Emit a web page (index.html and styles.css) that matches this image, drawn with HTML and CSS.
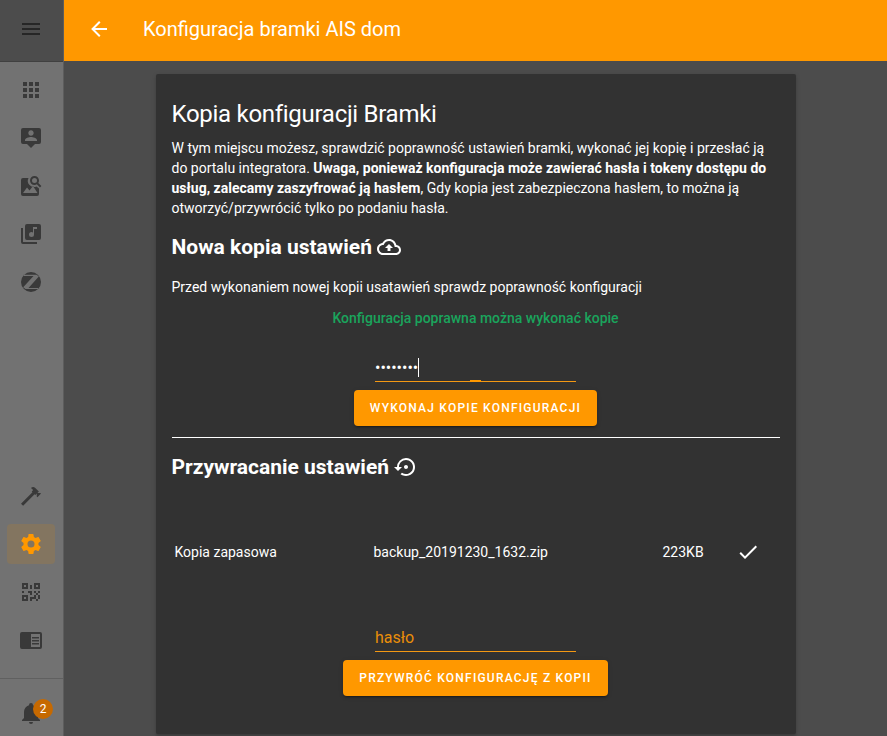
FILE: index.html
```html
<!DOCTYPE html>
<html lang="pl">
<head>
<meta charset="utf-8">
<title>Konfiguracja bramki AIS dom</title>
<link rel="stylesheet" href="styles.css">
</head>
<body>
<aside class="sidebar">
  <div class="menu"><svg class="icon" viewBox="0 0 24 24"><path d="M3 6h18v2H3V6m0 5h18v2H3v-2m0 5h18v2H3v-2z"/></svg></div>
  <nav class="nav">
    <a class="item"><svg class="icon" viewBox="0 0 24 24"><path d="M16 20h4v-4h-4m0-2h4v-4h-4m-6-2h4V4h-4m6 4h4V4h-4m-6 10h4v-4h-4m-6 4h4v-4H4m0 10h4v-4H4m6 4h4v-4h-4m-6-8h4V4H4v4z"/></svg></a>
    <a class="item"><svg class="icon" viewBox="0 0 24 24"><path d="M20 2H4a2 2 0 0 0-2 2v12a2 2 0 0 0 2 2h4l4 4 4-4h4a2 2 0 0 0 2-2V4a2 2 0 0 0-2-2m-8 2.300c1.500 0 2.700 1.200 2.700 2.700S13.500 9.700 12 9.700 9.300 8.500 9.300 7s1.200-2.700 2.700-2.700M18 15H6v-.9c0-2 4-3.100 6-3.100s6 1.100 6 3.100v.9z"/></svg></a>
    <a class="item"><svg class="icon" viewBox="0 0 24 24"><path d="M15.500 2C13 2 11 4 11 6.500S13 11 15.500 11c.9 0 1.700-.25 2.400-.69L21 13.390 22.390 12l-3.080-3.110c.44-.69.69-1.520.69-2.390C20 4 18 2 15.500 2m0 2a2.500 2.500 0 0 1 0 5 2.500 2.500 0 0 1 0-5"/><path fill-rule="evenodd" d="M9.500 4H4a2 2 0 0 0-2 2v14a2 2 0 0 0 2 2h14a2 2 0 0 0 2-2v-5.500l-2.500-2A6.200 6.200 0 0 1 9.500 4M8 13.500l2.500 3 3.500-4.500 4.500 7H4l4-5.500z"/></svg></a>
    <a class="item"><svg class="icon" viewBox="0 0 24 24"><path d="M20 2H8a2 2 0 0 0-2 2v12a2 2 0 0 0 2 2h12a2 2 0 0 0 2-2V4a2 2 0 0 0-2-2m-2 5h-3v5.500a2.500 2.500 0 1 1-2.500-2.500c.57 0 1.080.19 1.500.51V5h4M4 6H2v14a2 2 0 0 0 2 2h14v-2H4V6z"/></svg></a>
    <a class="item"><svg class="icon" viewBox="0 0 24 24"><path fill-rule="evenodd" d="M12 2a10 10 0 1 1 0 20 10 10 0 0 1 0-20M4.800 4.700 17.500 4.700 19.800 6.500 9.500 17.900 20.300 17.900 19.500 19 6.500 19 4.200 17.200 14.500 5.900 4 5.900z"/></svg></a>
    <span class="spacer"></span>
    <a class="item"><svg class="icon" viewBox="0 0 24 24"><path d="M2 19.630L13.430 8.200l-.71-.7 1.420-1.430L12 3.890c1.200-1.190 3.090-1.190 4.270 0l3.600 3.610-1.420 1.410h2.840l.71.710-3.550 3.590-.71-.71V9.620l-1.470 1.420-.71-.71L4.130 21.760 2 19.630z"/></svg></a>
    <a class="item active"><svg class="icon" viewBox="0 0 24 24"><path d="M12 15.500A3.500 3.500 0 0 1 8.500 12 3.500 3.500 0 0 1 12 8.500a3.500 3.500 0 0 1 3.500 3.500 3.500 3.500 0 0 1-3.500 3.500m7.430-2.530c.04-.32.070-.64.070-.97s-.03-.66-.07-1l2.110-1.630c.19-.15.240-.42.120-.64l-2-3.460c-.12-.22-.39-.31-.61-.22l-2.490 1c-.52-.39-1.060-.73-1.690-.98l-.37-2.650A.506.506 0 0 0 14 2h-4c-.25 0-.46.180-.5.420l-.37 2.650c-.63.250-1.170.59-1.690.98l-2.490-1c-.22-.09-.49 0-.61.220l-2 3.460c-.13.220-.07.490.12.640L4.570 11c-.04.340-.07.670-.07 1s.03.650.07.970l-2.110 1.660c-.19.150-.25.420-.12.640l2 3.460c.12.220.39.300.61.220l2.490-1.010c.52.400 1.060.740 1.690.990l.37 2.650c.04.240.25.420.5.420h4c.25 0 .46-.18.5-.42l.37-2.650c.63-.26 1.170-.59 1.690-.99l2.490 1.010c.22.080.49 0 .61-.22l2-3.460c.12-.22.070-.49-.12-.64l-2.110-1.660z"/></svg></a>
    <a class="item"><svg class="icon" viewBox="0 0 24 24"><path d="M3 11h2v2H3v-2m8-6h2v4h-2V5m-2 6h4v4h-2v-2H9v-2m6 0h2v2h2v-2h2v2h-2v2h2v4h-2v2h-2v-2h-4v2h-2v-4h4v-2h2v-2h-2v-2m4 8v-4h-2v4h2M15 3h6v6h-6V3m2 2v2h2V5h-2M3 3h6v6H3V3m2 2v2h2V5H5M3 15h6v6H3v-6m2 2v2h2v-2H5z"/></svg></a>
    <a class="item"><svg class="icon" viewBox="0 0 24 24"><path fill-rule="evenodd" d="M3 4h18a2 2 0 0 1 2 2v13a2 2 0 0 1-2 2H3a2 2 0 0 1-2-2V6a2 2 0 0 1 2-2m9 2v13h9V6zM13 9h7v1.500h-7zm0 3h7v1.500h-7zm0 3h7v1.500h-7z"/></svg></a>
  </nav>
  <div class="notice"><div class="bell"><svg class="icon" viewBox="0 0 24 24"><path d="M21 19v1H3v-1l2-2v-6c0-3.100 2.030-5.830 5-6.710V4a2 2 0 0 1 4 0v.29c2.970.88 5 3.610 5 6.710v6l2 2m-7 2a2 2 0 0 1-4 0"/></svg><span class="badge">2</span></div></div>
</aside>
<div class="page">
  <header class="bar">
    <svg class="icon" viewBox="0 0 24 24"><path d="M20 11v2H8l5.500 5.500-1.420 1.420L4.160 12l7.920-7.920L13.500 5.500 8 11h12z"/></svg>
    <span>Konfiguracja bramki AIS dom</span>
  </header>
  <main class="card">
    <h1>Kopia konfiguracji Bramki</h1>
    <p class="intro">W tym miejscu możesz, sprawdzić poprawność ustawień bramki, wykonać jej kopię i przesłać ją do portalu integratora. <b>Uwaga, ponieważ konfiguracja może zawierać hasła i tokeny dostępu do usług, zalecamy zaszyfrować ją hasłem</b>, Gdy kopia jest zabezpieczona hasłem, to można ją otworzyć/przywrócić tylko po podaniu hasła.</p>
    <h2>Nowa kopia ustawień <svg class="icon" viewBox="0 0 24 24"><path d="M19.350 10.040C18.670 6.590 15.640 4 12 4 9.110 4 6.600 5.640 5.350 8.040 2.340 8.360 0 10.910 0 14c0 3.310 2.690 6 6 6h13c2.760 0 5-2.240 5-5 0-2.640-2.050-4.780-4.650-4.960zM19 18H6c-2.210 0-4-1.790-4-4 0-2.050 1.530-3.760 3.560-3.970l1.070-.11.500-.95C8.080 7.140 9.940 6 12 6c2.620 0 4.880 1.860 5.390 4.430l.3 1.500 1.530.11c1.560.1 2.780 1.410 2.780 2.960 0 1.650-1.350 3-3 3zM8 13h2.550v3h2.900v-3H16l-4-4z"/></svg></h2>
    <p class="hint">Przed wykonaniem nowej kopii usatawień sprawdz poprawność konfiguracji</p>
    <p class="valid">Konfiguracja poprawna można wykonać kopie</p>
    <div class="field focused"><span class="dots">••••••••</span><span class="caret"></span></div>
    <button class="action">WYKONAJ KOPIE KONFIGURACJI</button>
    <div class="rule"></div>
    <h2>Przywracanie ustawień <svg class="icon" viewBox="0 0 24 24"><path d="M14 12c0-1.100-.9-2-2-2s-2 .9-2 2 .9 2 2 2 2-.9 2-2zm-2-9a9 9 0 0 0-9 9H0l4 4 4-4H5c0-3.870 3.130-7 7-7s7 3.130 7 7a6.995 6.995 0 0 1-11.060 5.700l-1.420 1.440A9 9 0 1 0 12 3z"/></svg></h2>
    <div class="backup"><span class="kind">Kopia zapasowa</span><span class="file">backup_20191230_1632.zip</span><span class="size">223KB</span><svg class="icon" viewBox="0 0 24 24"><path d="M21 7L9 19l-5.500-5.500 1.410-1.410L9 16.170 19.590 5.590 21 7z"/></svg></div>
    <div class="field empty">hasło</div>
    <button class="action">PRZYWRÓĆ KONFIGURACJĘ Z KOPII</button>
  </main>
</div>
</body>
</html>
```
FILE: styles.css
```css
* { box-sizing: border-box; }
body {
  margin: 0;
  height: 736px;
  display: flex;
  overflow: hidden;
  background: #4c4c4c;
  color: #fff;
  font: 14px/20px Roboto, sans-serif;
}
.icon { width: 24px; height: 24px; fill: currentColor; flex: none; display: block; }
.sidebar {
  width: 64px;
  flex: none;
  display: flex;
  flex-direction: column;
  background: #727272;
  border-right: 1px solid #5d5d5d;
  color: #393939;
}
.menu {
  height: 62px;
  padding: 17px 0 0 19px;
  background: #4c4c4c;
  border-bottom: 1px solid #404040;
  color: #262626;
}
.nav { flex: 1; display: flex; flex-direction: column; gap: 8px; padding: 8px 7px 18px; }
.item { height: 40px; width: 48px; display: flex; align-items: center; justify-content: center; border-radius: 4px; }
.active { background: #837560; color: #ff9800; }
.spacer { flex: 1; }
.notice { height: 58px; border-top: 1px solid #606060; padding: 22px 0 0 19px; }
.bell { position: relative; width: 24px; }
.badge {
  position: absolute;
  left: 14px;
  top: -2px;
  width: 20px;
  height: 20px;
  border-radius: 50%;
  background: #c66900;
  color: #fff;
  font-size: 12px;
  line-height: 20px;
  text-align: center;
}
.page { flex: 1; min-width: 0; }
.bar {
  height: 61px;
  display: flex;
  align-items: center;
  gap: 32px;
  padding: 0 0 3px 23px;
  background: #ff9800;
  font-size: 20px;
}
.card {
  width: 640px;
  height: 660px;
  margin: 13px 0 0 91.500px;
  padding: 24px 16px 0;
  background: #323232;
  border-radius: 2px;
  box-shadow: 0 2px 2px rgba(0,0,0,.14), 0 1px 5px rgba(0,0,0,.12);
}
h1 { margin: 0; font-size: 24px; line-height: 32px; font-weight: 400; letter-spacing: -.288px; }
p { margin: 0; }
.intro { margin-top: 8px; }
h2 { display: flex; align-items: center; gap: 5px; height: 24px; margin: 17px 0 0; font-size: 21px; line-height: 24px; font-weight: 700; }
.hint { margin-top: 18px; }
.valid { margin-top: 11px; text-align: center; color: #1aa45c; font-weight: 500; }
.field {
  position: relative;
  display: flex;
  align-items: center;
  width: 201px;
  height: 30px;
  margin: 24px auto 0 203.500px;
  border-bottom: 1px solid #f39813;
  color: #ea8e09;
  font-size: 16px;
}
.focused::after { content: ""; position: absolute; left: 95px; bottom: -1px; width: 11px; height: 2px; background: #ff9800; }
.empty { padding-top: 2px; }
.dots { padding-top: 2px; color: #fff; }
.caret { width: 1px; height: 19px; margin-top: 1px; background: #fff; }
.action {
  display: block;
  height: 36px;
  margin: 8px auto 0;
  padding: 0 16px;
  border: 0;
  border-radius: 4px;
  background: #ff9800;
  box-shadow: 0 3px 1px -2px rgba(0,0,0,.2), 0 2px 2px rgba(0,0,0,.14), 0 1px 5px rgba(0,0,0,.12);
  color: #fff;
  font: 500 12px/36px Roboto, sans-serif;
  letter-spacing: 1.210px;
  white-space: nowrap;
}
.rule { height: 1px; margin-top: 11px; background: #fff; }
.rule + h2 { margin-top: 17px; }
.backup { display: grid; grid-template-columns: 199px 289px 73px 24px; align-items: center; margin: 49px 0 0 3px; height: 48px; }
.backup + .field { margin-top: 46px; }
```
